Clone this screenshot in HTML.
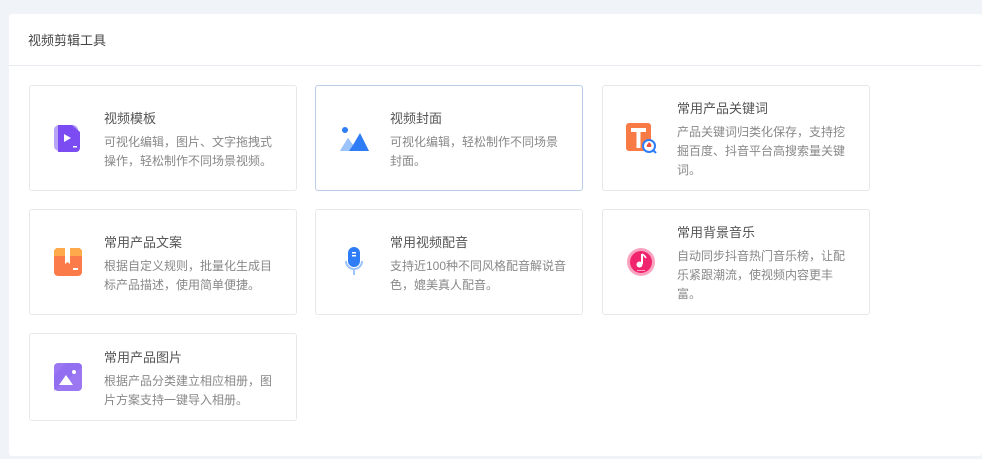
<!DOCTYPE html><html><head><meta charset="utf-8"><style>
body{margin:0;background:#f0f3f8;font-family:"Liberation Sans","Noto Sans CJK SC",sans-serif;width:982px;height:459px;overflow:hidden;position:relative}
.panel{position:absolute;left:9px;top:14px;width:973px;height:442px;background:#fff;border-radius:3px}
.hd{height:51px;border-bottom:1px solid #e8ebf0;font-size:13px;color:#444;line-height:54px;padding-left:19px}
.card{position:absolute;width:266px;border:1px solid #e6e8ec;border-radius:3px;background:#fff;display:flex;align-items:center;box-sizing:content-box}
.card.a{border-color:#b9cde6}
.ic{position:absolute;left:22px;top:50%;margin-top:-16px;width:32px;height:32px}
.tx{margin-left:74px;padding-top:4px}
.t{font-size:13px;color:#555;line-height:18px;margin-bottom:5px}
.d{width:178px;font-size:12px;line-height:19px;color:#888}
</style></head><body>
<div class="panel"><div class="hd">视频剪辑工具</div></div>

<div class="card" style="left:29px;top:85px;height:104px">
<svg class="ic" viewBox="0 0 32 32"><rect x="2" y="3" width="24" height="26" rx="5" fill="#b7a4f7"/><path d="M6 3h14l8 7v16a4 4 0 0 1-4 4H6z" fill="#7a4cf2"/><path d="M12 12l7 4-7 4z" fill="#fff"/><rect x="21" y="24" width="4" height="1.5" fill="#fff"/></svg>
<div class="tx"><div class="t">视频模板</div><div class="d">可视化编辑，图片、文字拖拽式操作，轻松制作不同场景视频。</div></div></div>

<div class="card a" style="left:315px;top:85px;height:104px">
<svg class="ic" viewBox="0 0 32 32"><circle cx="7" cy="8" r="3" fill="#2e7cf6"/><path d="M2 29l8-13 5 7 7-12 9 18z" fill="#2e7cf6"/><path d="M2 29l8-13 5 7-4 6z" fill="#9cc3fb"/></svg>
<div class="tx"><div class="t">视频封面</div><div class="d">可视化编辑，轻松制作不同场景封面。</div></div></div>

<div class="card" style="left:602px;top:85px;height:104px">
<svg class="ic" viewBox="0 0 32 32"><rect x="1" y="1" width="25" height="28" rx="3" fill="#f87a45"/><path d="M6 6h15v4h-5.5v16h-4V10H6z" fill="#fff"/><circle cx="24" cy="24" r="6" fill="#fff" stroke="#2e7cf6" stroke-width="2"/><path d="M28 28l3 3" stroke="#2e7cf6" stroke-width="2"/><path d="M24 20c2 2 3 3 2 5h-4c-1-2 1-3 2-5z" fill="#f04c3c"/></svg>
<div class="tx"><div class="t">常用产品关键词</div><div class="d">产品关键词归类化保存，支持挖掘百度、抖音平台高搜索量关键词。</div></div></div>

<div class="card" style="left:29px;top:209px;height:104px">
<svg class="ic" viewBox="0 0 32 32"><rect x="2" y="2" width="28" height="28" rx="4" fill="#fb7c4a"/><path d="M2 6a4 4 0 0 1 4-4h20a4 4 0 0 1 4 4v4H2z" fill="#fea94a"/><path d="M13 2h5v16l-2.5-2-2.5 2z" fill="#fff"/><rect x="21" y="22" width="5" height="2" fill="#fff"/></svg>
<div class="tx"><div class="t">常用产品文案</div><div class="d">根据自定义规则，批量化生成目标产品描述，使用简单便捷。</div></div></div>

<div class="card" style="left:315px;top:209px;height:104px">
<svg class="ic" viewBox="0 0 32 32"><path d="M8 15a8 8 0 0 0 16 0" fill="none" stroke="#9cc3fb" stroke-width="2"/><path d="M16 23v6" stroke="#9cc3fb" stroke-width="2"/><rect x="10" y="1" width="12" height="20" rx="6" fill="#2e7cf6"/><rect x="14" y="6" width="4" height="1.5" fill="#fff"/><rect x="14" y="9" width="4" height="1.5" fill="#fff"/></svg>
<div class="tx"><div class="t">常用视频配音</div><div class="d">支持近100种不同风格配音解说音色，媲美真人配音。</div></div></div>

<div class="card" style="left:602px;top:209px;height:104px">
<svg class="ic" viewBox="0 0 32 32"><circle cx="16" cy="16" r="14" fill="#f9a3bf"/><circle cx="16" cy="16" r="11" fill="#f0256e"/><path d="M17 8v10" stroke="#fff" stroke-width="2"/><circle cx="14.5" cy="18.5" r="3" fill="#fff"/><path d="M17 8c2 1 3 2 4 4" stroke="#fff" stroke-width="1.5" fill="none"/><rect x="12" y="24" width="8" height="1" fill="#f9a3bf"/></svg>
<div class="tx"><div class="t">常用背景音乐</div><div class="d">自动同步抖音热门音乐榜，让配乐紧跟潮流，使视频内容更丰富。</div></div></div>

<div class="card" style="left:29px;top:333px;height:86px">
<svg class="ic" viewBox="0 0 32 32"><rect x="2" y="2" width="28" height="28" rx="4" fill="#9b78f2"/><path d="M2 14L14 2h12a4 4 0 0 1 4 4v0L2 30z" fill="#8a63ee" opacity=".5"/><path d="M7 24l7-10 7 10z" fill="#fff"/><circle cx="22" cy="11" r="2" fill="#fff"/></svg>
<div class="tx"><div class="t">常用产品图片</div><div class="d">根据产品分类建立相应相册，图片方案支持一键导入相册。</div></div></div>
</body></html>
